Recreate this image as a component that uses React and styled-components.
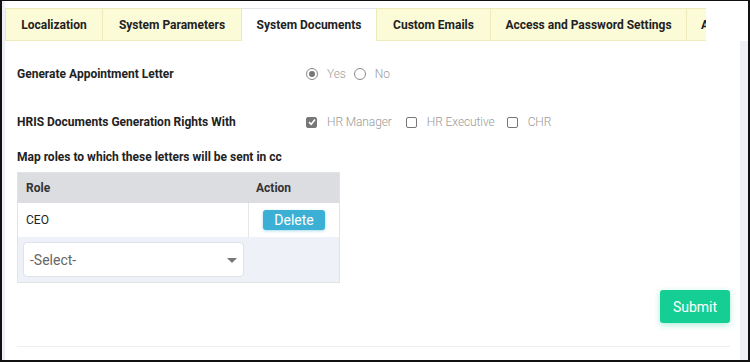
import styled, { createGlobalStyle } from "styled-components";

const Global = createGlobalStyle`
  html, body { margin: 0; padding: 0; background: #fff; }
  body { font-family: Roboto, "Liberation Sans", Arial, sans-serif; }
  * { box-sizing: border-box; }
`;

// outer frame of the screenshot
const Frame = styled.div`
  width: 750px;
  height: 362px;
  border: solid #111;
  border-width: 1px 2px 2px 2px;
  display: flex;
  background: #fff;
  overflow: hidden;
`;

const Gutter = styled.div`
  width: 3px;
  background: #eef0f5;
`;

const Main = styled.div`
  flex: 1;
  display: flex;
  flex-direction: column;
  min-width: 0;
`;

const TabBar = styled.div`
  display: flex;
  margin-top: 7px;
  width: 701px;
  overflow: hidden;
`;

const Tab = styled.div`
  flex: none;
  width: ${(p) => p.$w}px;
  height: 33px;
  padding-left: ${(p) => p.$indent || 0}px;
  display: flex;
  align-items: center;
  justify-content: ${(p) => (p.$indent ? "flex-start" : "center")};
  font-size: 12px;
  font-weight: 700;
  color: #222;
  white-space: nowrap;
  overflow: hidden;
  background: ${(p) => (p.$active ? "#fff" : "#fcfbd7")};
  border: 1px solid ${(p) => (p.$active ? "#e2e4ea" : "#efeab9")};
  border-bottom: ${(p) => (p.$active ? "none" : "1px solid #efeab9")};
  margin-right: -1px;
`;

const Panel = styled.div`
  flex: 1;
  border-right: 8px solid #eef0f5;
  padding: 0 10px 0 12px;
  display: flex;
  flex-direction: column;
`;

const Row = styled.div`
  display: flex;
  align-items: center;
  height: 18px;
  margin-top: ${(p) => p.$top}px;
`;

const Label = styled.div`
  width: 289px;
  font-size: 12px;
  font-weight: 700;
  color: #222;
`;

const Options = styled.div`
  display: flex;
  align-items: center;
`;

const Option = styled.label`
  display: flex;
  align-items: center;
  font-size: 12px;
  color: #9a9a9a;
  font-weight: 300;
  letter-spacing: -0.1px;
  margin-right: ${(p) => p.$gap || 8}px;
`;

const Radio = styled.span`
  width: 12px;
  height: 12px;
  border-radius: 50%;
  border: 1px solid #8a8a8a;
  margin-right: 9px;
  display: flex;
  align-items: center;
  justify-content: center;
  &::after {
    content: "";
    width: 6px;
    height: 6px;
    border-radius: 50%;
    background: ${(p) => (p.$on ? "#777" : "transparent")};
  }
`;

const Check = styled.span`
  width: 11px;
  height: 11px;
  border-radius: 2px;
  border: 1px solid #777;
  background: ${(p) => (p.$on ? "#777" : "#fff")};
  margin-right: 10px;
  display: flex;
  align-items: center;
  justify-content: center;
`;

const SubHead = styled.div`
  font-size: 12px;
  font-weight: 700;
  color: #222;
  margin-top: 19px;
`;

const Table = styled.div`
  width: 323px;
  margin-top: 8px;
  border: 1px solid #e2e3e7;
  display: grid;
  grid-template-columns: 230px 1fr;
`;

const Th = styled.div`
  background: #dcdde1;
  height: 30px;
  display: flex;
  align-items: center;
  padding-left: ${(p) => p.$pad}px;
  font-size: 12px;
  font-weight: 700;
  color: #333;
`;

const Td = styled.div`
  height: ${(p) => p.$h}px;
  display: flex;
  align-items: center;
  justify-content: ${(p) => (p.$center ? "center" : "flex-start")};
  padding-left: ${(p) => p.$pad || 0}px;
  background: ${(p) => p.$bg || "#fff"};
  border-left: ${(p) => (p.$line ? "1px solid #e6e7eb" : "none")};
  font-size: 12px;
  color: #222;
`;

const DeleteBtn = styled.button`
  width: 62px;
  height: 20px;
  border: none;
  border-radius: 3px;
  background: #3bb0d4;
  color: #fff;
  font-family: inherit;
  font-size: 14px;
  padding: 0;
  box-shadow: 0 1px 3px rgba(59, 176, 212, 0.45);
`;

const Select = styled.div`
  width: 221px;
  height: 35px;
  background: #fff;
  border: 1px solid #dfe2e8;
  border-radius: 4px;
  display: flex;
  align-items: center;
  justify-content: space-between;
  padding: 0 6px 0 6px;
  font-size: 14px;
  color: #666;
`;

const Caret = styled.span`
  width: 0;
  height: 0;
  border-left: 5px solid transparent;
  border-right: 5px solid transparent;
  border-top: 5px solid #777;
  margin-top: 2px;
`;

const Footer = styled.div`
  display: flex;
  justify-content: flex-end;
  margin-top: 7px;
`;

const SubmitBtn = styled.button`
  width: 70px;
  height: 33px;
  border: none;
  border-radius: 3px;
  background: #15ce93;
  color: #fff;
  font-family: inherit;
  font-size: 14px;
  box-shadow: 0 2px 6px rgba(21, 206, 147, 0.35);
`;

const Rule = styled.div`
  margin-top: 23px;
  height: 1px;
  background: #eceef2;
`;

const Tick = () => (
  <svg width="8" height="8" viewBox="0 0 8 8">
    <path d="M1 4.2 L3.2 6.3 L7 1.6" stroke="#fff" strokeWidth="1.6" fill="none" />
  </svg>
);

export default function App() {
  return (
    <>
      <Global />
      <Frame>
        <Gutter />
        <Main>
          <TabBar>
            <Tab $w={98}>Localization</Tab>
            <Tab $w={140}>System Parameters</Tab>
            <Tab $active $w={136}>System Documents</Tab>
            <Tab $w={115}>Custom Emails</Tab>
            <Tab $w={197}>Access and Password Settings</Tab>
            <Tab $w={120} $indent={14}>Approval Settings</Tab>
          </TabBar>
          <Panel>
            <Row $top={24}>
              <Label>Generate Appointment Letter</Label>
              <Options>
                <Option $gap={8}><Radio $on />Yes</Option>
                <Option><Radio />No</Option>
              </Options>
            </Row>
            <Row $top={30}>
              <Label>HRIS Documents Generation Rights With</Label>
              <Options>
                <Option $gap={14}><Check $on><Tick /></Check>HR Manager</Option>
                <Option $gap={12}><Check />HR Executive</Option>
                <Option><Check />CHR</Option>
              </Options>
            </Row>
            <SubHead>Map roles to which these letters will be sent in cc</SubHead>
            <Table>
              <Th $pad={8}>Role</Th>
              <Th $pad={8}>Action</Th>
              <Td $h={34} $pad={8}>CEO</Td>
              <Td $h={34} $center $line><DeleteBtn>Delete</DeleteBtn></Td>
              <Td $h={45} $pad={5} $bg="#eef1f8">
                <Select>-Select-<Caret /></Select>
              </Td>
              <Td $h={45} $bg="#eef1f8" />
            </Table>
            <Footer>
              <SubmitBtn>Submit</SubmitBtn>
            </Footer>
            <Rule />
          </Panel>
        </Main>
      </Frame>
    </>
  );
}
